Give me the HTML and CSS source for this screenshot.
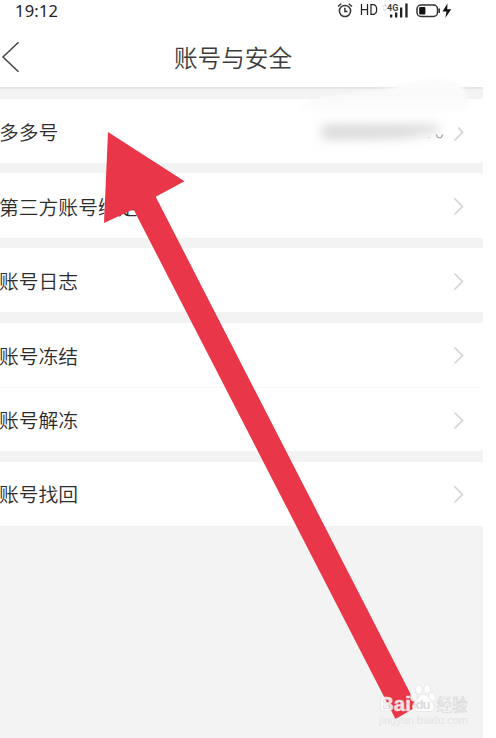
FILE: index.html
```html
<!DOCTYPE html>
<html lang="zh-CN">
<head>
<meta charset="utf-8">
<title>账号与安全</title>
<link rel="stylesheet" href="styles.css">
</head>
<body>
<div class="screen">
  <header class="top">
    <div class="status">
      <time class="clock">19:12</time>
      <div class="indicators">
        <svg class="alarm" width="16" height="18" viewBox="0 0 16 18" fill="none" stroke="#333" stroke-width="1.5"><circle cx="8" cy="10" r="5.6"/><path d="M7.9 6.8v3.7h2.6M1 5.5 4.2 2.8M15 5.5l-3.2-2.7"/></svg>
        <span class="hd">HD</span>
        <svg class="signal" width="28" height="18" viewBox="0 0 28 18"><path d="M1 5.7 2.8 3.7l1.800 2M1 7.700l1.800 2 1.800-2" fill="none" stroke="#ccc"/><text x="5" y="9.5" class="net">4G</text><path d="M8 13.5h2.3v3H8zM13 11.5h2.3v5H13zM18 6.5h2.3v10H18zM23.300 2.5h2.3v14h-2.3z" fill="#222"/></svg>
        <svg class="battery" width="36" height="18" viewBox="0 0 36 18"><rect x="1" y="4" width="20.5" height="11.5" rx="4" fill="none" stroke="#333" stroke-width="1.5"/><rect x="3.2" y="6" width="6.2" height="7.5" rx="1" fill="#111"/><path d="M23.2 7.5v4.5" stroke="#333" stroke-width="1.6"/><path d="M31.5 2.5 26.5 10.5h4l-1.2 6.5 5.9-8.7h-4z" fill="#111"/></svg>
      </div>
    </div>
    <nav class="bar">
      <svg class="back" width="20" height="32" viewBox="0 0 20 32"><path d="M18.5 1.3 3 16l15.500 14.800" fill="none" stroke="#444" stroke-width="1.5"/></svg>
      <h1 class="title">账号与安全</h1>
    </nav>
  </header>
  <main class="list">
    <section class="group"><div class="row"><span>多多号</span><svg class="chev" width="11" height="19" viewBox="0 0 11 19"><path d="m5.5 4.500 4 5-8 8"/></svg></div></section>
    <section class="group tall"><div class="row"><span>第三方账号绑定</span><svg class="chev" width="11" height="19" viewBox="0 0 11 19"><path d="m1.5 1.5 8 8-8 8"/></svg></div></section>
    <section class="group"><div class="row"><span>账号日志</span><svg class="chev" width="11" height="19" viewBox="0 0 11 19"><path d="m1.5 1.5 8 8-8 8"/></svg></div></section>
    <section class="group pair">
      <div class="row"><span>账号冻结</span><svg class="chev" width="11" height="19" viewBox="0 0 11 19"><path d="m1.5 1.5 8 8-8 8"/></svg></div>
      <div class="row"><span>账号解冻</span><svg class="chev" width="11" height="19" viewBox="0 0 11 19"><path d="m1.5 1.5 8 8-8 8"/></svg></div>
    </section>
    <section class="group"><div class="row up"><span>账号找回</span><svg class="chev" width="11" height="19" viewBox="0 0 11 19"><path d="m1.5 1.5 8 8-8 8"/></svg></div></section>
  </main>
  <svg class="overlay" width="483" height="738" viewBox="0 0 483 738">
    <defs>
      <filter id="soft" x="-30%" y="-150%" width="160%" height="400%"><feGaussianBlur stdDeviation="6"/></filter>
      <filter id="edge" x="-10%" y="-20%" width="120%" height="140%"><feGaussianBlur stdDeviation="1.5"/></filter>
      <linearGradient id="veil" x1="0" y1="0" x2="0" y2="1"><stop offset="0" stop-color="#fafafa"/><stop offset=".5" stop-color="#f9f9f9"/><stop offset="1" stop-color="#fff"/></linearGradient>
    </defs>
    <path d="M300 106C318 94 360 94 392 88C414 80 440 77 455 82C466 86 469 98 468 111L440 116H310Z" fill="url(#veil)" filter="url(#edge)"/>
    <path d="M322 125H442L436 132L400 138L322 139Z" fill="#d6d6d6" filter="url(#soft)"/>
    <path d="M436.5 134.5c.5 4.5 5.5 4.5 6 0" fill="none" stroke="#aaa" stroke-width="1.4"/>
    <circle cx="429" cy="137.5" r=".8" fill="#ccc"/>
    <path d="M108 132 184.5 181.3 155.7 196.7 417 706.5 395.5 719 133.5 209.300 104 223Z" fill="#e93648"/>
    <g class="mark">
      <text x="379" y="711" class="brand" textLength="32" lengthAdjust="spacingAndGlyphs">Bai</text>
      <ellipse cx="413.8" cy="697" rx="3.3" ry="4.3"/><ellipse cx="418.8" cy="689.5" rx="3.3" ry="4.3"/><ellipse cx="427.2" cy="689" rx="3.3" ry="4.3"/><ellipse cx="432" cy="697" rx="3.3" ry="4.3"/>
      <path d="M423 694.5c-3 0-4 3-7 6-5 4-5 11 2 11h11c7 0 6-7 2-11-3-3-4-6-8-6Z"/>
      <text x="415.5" y="709" class="du" textLength="15">du</text>
      <text x="436.5" y="711" class="cn" textLength="31" lengthAdjust="spacingAndGlyphs">经验</text>
      <text x="379" y="723.5" class="url" textLength="89" lengthAdjust="spacingAndGlyphs">jingyan.baidu.com</text>
    </g>
  </svg>
</div>
</body>
</html>
```
FILE: styles.css
```css
* { box-sizing: border-box; }
body { margin: 0; background: #fff; font-family: "Noto Sans CJK SC", sans-serif; overflow: hidden; }
.screen { position: relative; width: 483px; height: 738px; background: #f3f3f3; overflow: hidden; }
.top { height: 89px; background: #fff; border-bottom: 2px solid #e6e6e6; }
.status { display: flex; justify-content: space-between; height: 22px; padding: 0 31px 0 15px; }
.clock { font: 16.5px/22px "Noto Sans", sans-serif; letter-spacing: .2px; color: #222; }
.indicators { display: flex; align-items: flex-start; padding-top: 1px; }
.hd { margin: 0 7px 0 6px; font: 14.5px/20px Roboto, sans-serif; color: #222; transform: scaleX(.92); }
.signal { margin-right: 6px; margin-left: -3px; }
.alarm { margin-left: -2px; }
.hd + .signal { margin-left: -4px; }
.net { font: bold 9px Roboto, sans-serif; fill: #444; }
.bar { display: grid; grid-template-columns: 20px 1fr 37px; align-items: center; height: 65px; padding-top: 4px; }
.title { margin: 0; text-align: center; font-size: 23.6px; line-height: 34px; font-weight: 350; color: #3c3c3c; }
.list { padding-top: 10px; display: flex; flex-direction: column; }
.group { background: #fff; height: 64px; margin-bottom: 10px; display: flex; flex-direction: column; }
.group.tall { height: 65px; }
.group:nth-child(3) { margin-bottom: 11px; }
.group.pair { height: 128px; margin-bottom: 11px; }
.row { flex: 1; display: flex; align-items: center; justify-content: space-between; padding: 2px 19px 0 0; margin-left: -1px; font-size: 19.8px; font-weight: 350; line-height: 28px; color: #2c2c2c; }
.row.up { padding-top: 0; }
.pair .row + .row { border-top: 1px solid #f8f8f8; }
.chev { fill: none; stroke: #d2d2d2; stroke-width: 1.6; }
.overlay { position: absolute; left: 0; top: 0; }
.mark { fill: #fff; fill-opacity: .85; stroke: #dedede; stroke-width: .6; }
.brand { font: bold 20px "Liberation Sans", sans-serif; }
.du { font: bold 13px "Liberation Sans", sans-serif; fill: #d2d2d2; stroke: none; }
.cn { font: 17px "Noto Sans CJK SC", sans-serif; stroke: #d4d4d4; }
.url { font: 11px "Liberation Sans", sans-serif; fill: #e2e2e2; stroke: none; }
```
